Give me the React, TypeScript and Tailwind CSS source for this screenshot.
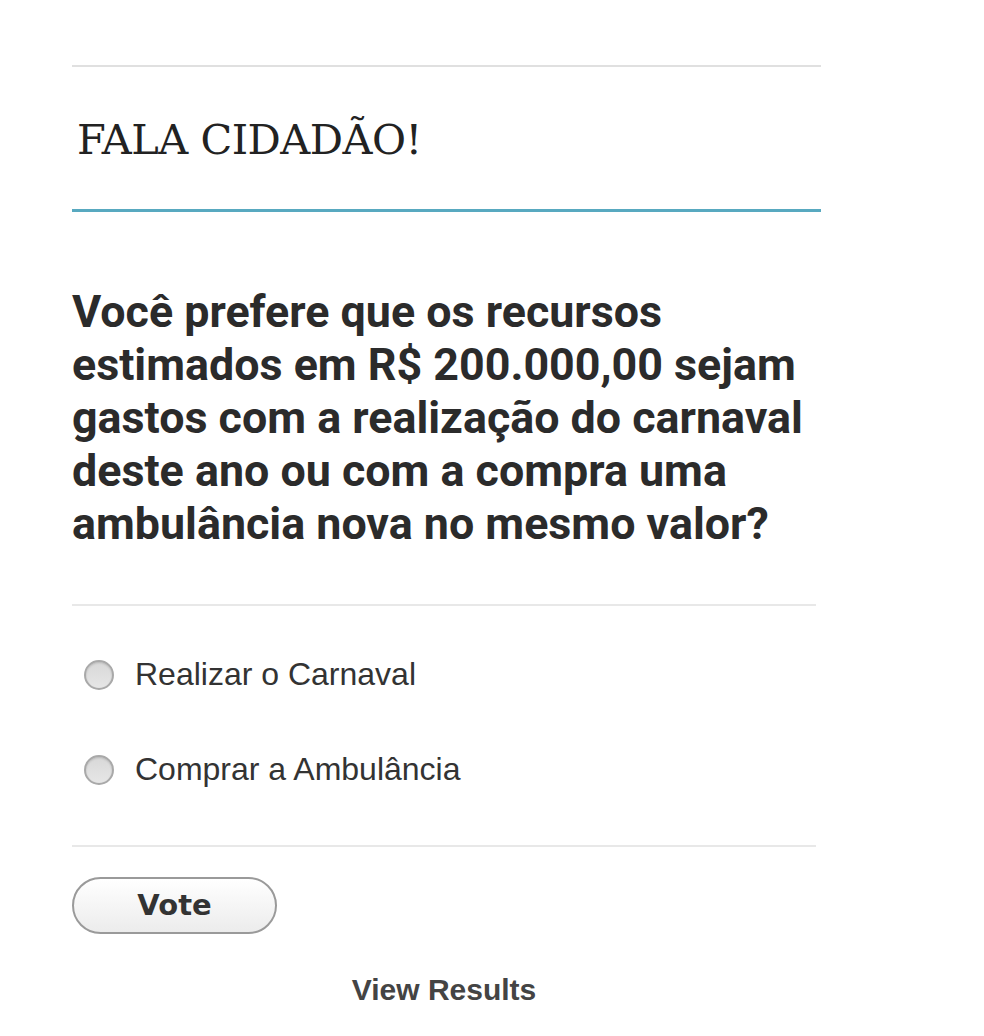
import React from "react";

const options = ["Realizar o Carnaval", "Comprar a Ambulância"];

function PollRadio() {
  return (
    <span className="block h-[30px] w-[30px] shrink-0 rounded-full border-2 border-[#a9a9a9] bg-gradient-to-b from-[#d8d8d8] to-[#e6e6e6] shadow-[inset_0_1px_2px_rgba(0,0,0,0.15)]" />
  );
}

export default function App() {
  return (
    <div className="min-h-[1036px] w-full bg-white">
      <div className="ml-[72px] w-[749px] pt-[65px]">
        {/* widget header */}
        <div className="h-[2px] w-full bg-[#e0e0e0]" />
        <h2
          className="pl-[5px] pt-[50px] pb-[46px] text-[41.5px] leading-[46px] tracking-[-0.5px] text-[#222]"
          style={{ fontFamily: '"DejaVu Serif", serif' }}
        >
          FALA CIDADÃO!
        </h2>
        <div className="h-[3px] w-full bg-[#58a9c0]" />

        {/* poll */}
        <div className="w-[744px]">
          <p
            className="pt-[73px] text-[44.8px] font-bold leading-[53px] text-[#2b2b2b]"
            style={{ fontFamily: "Roboto, sans-serif" }}
          >
            Você prefere que os recursos estimados em R$ 200.000,00 sejam gastos com a realização do carnaval deste ano ou com a compra uma ambulância nova no mesmo valor?
          </p>

          <div className="mt-[54px] h-[2px] w-full bg-[#e8e8e8]" />

          <div className="flex flex-col gap-[60px] pl-[12px] pt-[51px] pb-[58px]">
            {options.map((o) => (
              <label key={o} className="flex h-[35px] items-center gap-[21px]">
                <PollRadio />
                <span
                  className="text-[32px] leading-[35px] text-[#333]"
                  style={{ fontFamily: '"Liberation Sans", Arial, sans-serif' }}
                >
                  {o}
                </span>
              </label>
            ))}
          </div>

          <div className="h-[2px] w-full bg-[#e8e8e8]" />

          <div className="pt-[30px]">
            <button
              className="h-[57px] w-[205px] rounded-full border-2 border-[#9a9a9a] bg-gradient-to-b from-white to-[#ececec] text-[29px] font-bold text-[#333]"
              style={{ fontFamily: '"DejaVu Sans", Verdana, sans-serif' }}
            >
              Vote
            </button>
          </div>

          <div
            className="pt-[38px] text-center text-[30px] font-bold leading-[36px] text-[#444]"
            style={{ fontFamily: '"Liberation Sans", Arial, sans-serif' }}
          >
            View Results
          </div>
        </div>
      </div>
    </div>
  );
}
